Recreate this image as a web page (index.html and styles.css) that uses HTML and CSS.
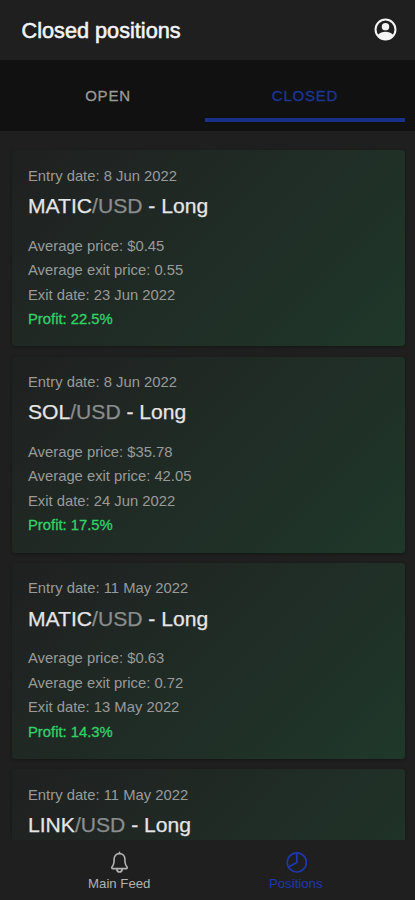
FILE: index.html
```html
<!DOCTYPE html>
<html lang="en">
<head>
<meta charset="utf-8">
<title>Closed positions</title>
<link rel="stylesheet" href="styles.css">
</head>
<body>
<header class="header">
  <h1>Closed positions</h1>
  <svg class="account" viewBox="0 0 24 24"><circle cx="12" cy="12" r="10.4" fill="none" stroke="currentColor" stroke-width="2.1"/><circle cx="12" cy="9" r="3.9" fill="currentColor"/><path d="M4 17.800C6 15.300 9 14.300 12 14.300s6 1 8 3.500c-2 3-5 4.700-8 4.700s-6-1.700-8-4.700z" fill="currentColor"/></svg>
</header>
<nav class="tabs"><span class="tab">OPEN</span><span class="tab selected">CLOSED</span></nav>
<main class="list">
  <article class="card">
    <p class="entry">Entry date: 8 Jun 2022</p>
    <h2>MATIC<span>/USD</span> - Long</h2>
    <p>Average price: $0.45</p><p>Average exit price: 0.55</p><p>Exit date: 23 Jun 2022</p>
    <p class="profit">Profit: 22.5%</p>
  </article>
  <article class="card">
    <p class="entry">Entry date: 8 Jun 2022</p>
    <h2>SOL<span>/USD</span> - Long</h2>
    <p>Average price: $35.78</p><p>Average exit price: 42.05</p><p>Exit date: 24 Jun 2022</p>
    <p class="profit">Profit: 17.5%</p>
  </article>
  <article class="card">
    <p class="entry">Entry date: 11 May 2022</p>
    <h2>MATIC<span>/USD</span> - Long</h2>
    <p>Average price: $0.63</p><p>Average exit price: 0.72</p><p>Exit date: 13 May 2022</p>
    <p class="profit">Profit: 14.3%</p>
  </article>
  <article class="card">
    <p class="entry">Entry date: 11 May 2022</p>
    <h2>LINK<span>/USD</span> - Long</h2>
  </article>
</main>
<footer class="bottom">
  <div class="item">
    <svg viewBox="0 0 22 22" fill="none" stroke="currentColor" stroke-width="1.6" stroke-linejoin="round" stroke-linecap="round"><path d="M11.500 1.300v1.300M11.500 2.600C8 2.600 6.100 5.200 6.100 8.500c0 4.500-.9 6.200-2.100 7.400-.6.700-.3 1.700.6 1.700h13.800c.9 0 1.200-1 .6-1.700-1.200-1.200-2.100-2.900-2.100-7.400 0-3.300-1.900-5.900-5.400-5.900zM8.700 17.800c.2 2 1.300 3.200 2.800 3.200s2.600-1.200 2.800-3.200"/></svg>
    <span>Main Feed</span>
  </div>
  <div class="item active">
    <svg viewBox="0 0 22 22" fill="none" stroke="currentColor" stroke-width="1.700" stroke-linejoin="round"><circle cx="11.800" cy="11.400" r="9.600"/><path d="M11.800 1.800V11.400l-7.800 4.300"/></svg>
    <span>Positions</span>
  </div>
</footer>
</body>
</html>
```
FILE: styles.css
```css
* { box-sizing: border-box; }
body {
  margin: 0;
  height: 900px;
  display: flex;
  flex-direction: column;
  overflow: hidden;
  background: #1f1f1f;
  color: #999b9a;
  font-family: "Liberation Sans", Arial, sans-serif;
}
h1, h2, p { margin: 0; font-weight: 400; white-space: nowrap; }
.header {
  flex: none;
  height: 60px;
  padding: 0 18px 1px 21.500px;
  display: flex;
  align-items: center;
  justify-content: space-between;
  color: #f4f4f4;
}
.header h1 { padding-top: 2px; font-size: 21.700px; -webkit-text-stroke: 0.550px; }
.account { width: 23px; height: 23px; }
.tabs {
  flex: none;
  height: 71px;
  padding: 0 10px 9px 11px;
  display: flex;
  background: #111;
}
.tab {
  flex: 1;
  display: flex;
  align-items: center;
  justify-content: center;
  padding-top: 12px;
  border-bottom: 4px solid transparent;
  font-size: 15px;
  letter-spacing: 0.8px;
  -webkit-text-stroke: 0.3px;
}
.tab:first-child { flex: 0 0 194px; }
.selected { color: #1c3696; border-color: #193189; }
.list {
  flex: 1;
  min-height: 0;
  overflow: hidden;
  padding: 19.300px 10px 0 12px;
}
.card {
  height: 196px;
  margin-bottom: 10.300px;
  padding: 13.600px 16px;
  border-radius: 4px;
  background: linear-gradient(135deg, #1f2020 0%, #202c26 50%, #1f3829 100%);
  box-shadow: 0 1px 3px #0c0f0d80;
  font-size: 14.800px;
  line-height: 24.400px;
}
.card h2 {
  margin: 3.700px 0 14.800px;
  font-size: 21.100px;
  line-height: 27px;
  color: #e6e6e6;
  -webkit-text-stroke: 0.250px;
}
.card h2 span { color: #8a8d8c; }
.card .profit { color: #32d366; -webkit-text-stroke: 0.3px; }
.bottom {
  flex: none;
  height: 60px;
  padding: 11px 31px 0;
  display: flex;
  background: #1f1f1f;
}
.item {
  flex: 1;
  display: flex;
  flex-direction: column;
  align-items: center;
  font-size: 13.200px;
  line-height: 16px;
  color: #b2b2b2;
}
.item svg { width: 22px; height: 22px; margin-bottom: 2.500px; }
.active { color: #2038ae; }
```
